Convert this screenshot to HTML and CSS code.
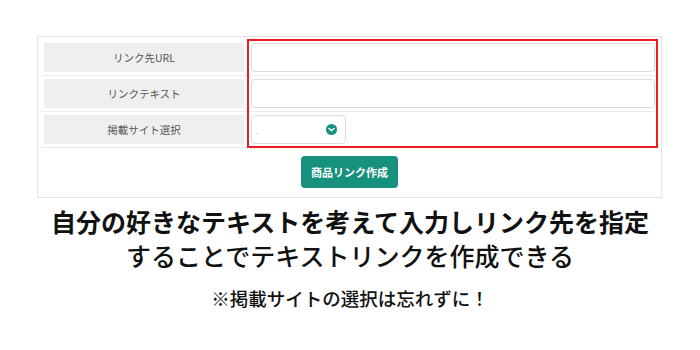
FILE: index.html
```html
<!DOCTYPE html>
<html lang="ja">
<head>
    <meta charset="UTF-8">
    <meta name="viewport" content="width=device-width, initial-scale=1.0">
    <title>テキストリンク作成</title>
    <link rel="stylesheet" href="styles.css">
</head>
<body>
    <div class="page">
        <div class="panel">
            <div class="rows">
                <div class="row">
                    <div class="label">リンク先URL</div>
                    <div class="field"><input type="text" class="text-input"></div>
                </div>
                <div class="row">
                    <div class="label">リンクテキスト</div>
                    <div class="field"><input type="text" class="text-input"></div>
                </div>
                <div class="row">
                    <div class="label">掲載サイト選択</div>
                    <div class="field">
                        <div class="select-box">
                            <span class="select-value">.</span>
                            <svg class="select-icon" width="11" height="11" viewBox="0 0 12 12">
                                <circle cx="6" cy="6" r="6" fill="#16917d"></circle>
                                <polyline points="3.4 4.9 6 7.4 8.6 4.9" fill="none" stroke="#fff" stroke-width="1.7" stroke-linecap="round" stroke-linejoin="round"></polyline>
                            </svg>
                        </div>
                    </div>
                </div>
                <div class="highlight"></div>
            </div>
            <div class="actions">
                <button type="button" class="create-btn">商品リンク作成</button>
            </div>
        </div>

        <div class="caption">
            <p class="lead">自分の好きなテキストを考えて入力しリンク先を指定</p>
            <p class="sub">することでテキストリンクを作成できる</p>
            <p class="note">※掲載サイトの選択は忘れずに！</p>
        </div>
    </div>
</body>
</html>
```

FILE: styles.css
```css
* {
    margin: 0;
    padding: 0;
    box-sizing: border-box;
    font-family: 'Noto Sans CJK JP', 'Noto Sans', sans-serif;
}

body {
    background-color: #fff;
    width: 700px;
    height: 350px;
    overflow: hidden;
}

.page {
    padding-top: 36px;
}

.panel {
    margin-left: 37px;
    width: 625px;
    height: 162px;
    border: 1px solid #e4e4e4;
    padding: 3px 3px 0 3px;
}

.rows {
    position: relative;
}

.row {
    display: flex;
    gap: 7px;
    padding: 3px 3px 3px 3px;
    border-bottom: 1px solid #ececec;
}

.label {
    width: 200px;
    height: 29px;
    background-color: #efefef;
    color: #555;
    font-size: 10.5px;
    display: flex;
    align-items: center;
    justify-content: center;
}

.field {
    flex: 1;
    display: flex;
}

.text-input {
    width: 100%;
    height: 29px;
    border: 1px solid #dcdcdc;
    border-radius: 4px;
    outline: none;
    background: #fff;
}

.select-box {
    width: 95px;
    height: 29px;
    border: 1px solid #dcdcdc;
    border-radius: 4px;
    display: flex;
    align-items: center;
    justify-content: space-between;
    padding: 0 8px 0 4px;
}

.select-value {
    color: #bbb;
    font-size: 9px;
    line-height: 1;
    margin-top: 2px;
}

.select-icon {
    display: block;
}

.highlight {
    position: absolute;
    left: 206px;
    top: -1px;
    right: 0;
    bottom: 0;
    border: 2px solid #ee1c24;
    pointer-events: none;
}

.actions {
    display: flex;
    justify-content: center;
    padding-top: 8px;
}

.create-btn {
    width: 97px;
    height: 32px;
    background-color: #16917d;
    color: #fff;
    border: none;
    border-radius: 4px;
    font-size: 11px;
    font-weight: bold;
}

.caption {
    text-align: center;
    color: #111;
}

.lead {
    margin-top: 6px;
    font-size: 25px;
    font-weight: bold;
    line-height: 34px;
}

.sub {
    font-size: 25px;
    font-weight: 500;
    line-height: 34px;
}

.note {
    margin-top: 13px;
    font-size: 18.5px;
    font-weight: 500;
    line-height: 26px;
}
```
